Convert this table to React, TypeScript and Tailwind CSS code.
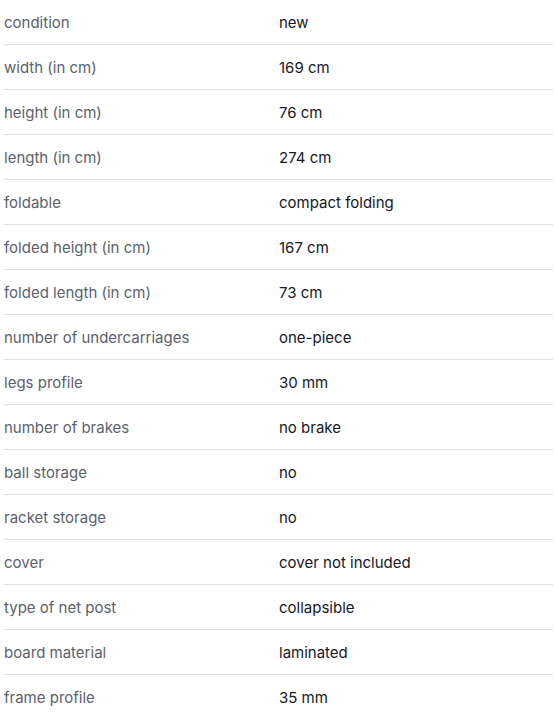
import React from 'react';

const specs: [string, string][] = [
  ['condition', 'new'],
  ['width (in cm)', '169 cm'],
  ['height (in cm)', '76 cm'],
  ['length (in cm)', '274 cm'],
  ['foldable', 'compact folding'],
  ['folded height (in cm)', '167 cm'],
  ['folded length (in cm)', '73 cm'],
  ['number of undercarriages', 'one-piece'],
  ['legs profile', '30 mm'],
  ['number of brakes', 'no brake'],
  ['ball storage', 'no'],
  ['racket storage', 'no'],
  ['cover', 'cover not included'],
  ['type of net post', 'collapsible'],
  ['board material', 'laminated'],
  ['frame profile', '35 mm'],
];

const App = () => {
  return (
    <div className="bg-white px-1 font-['Inter',sans-serif] text-[15px]">
      {specs.map(([label, value]) => (
        <div key={label} className="flex h-[45px] items-center border-b border-[#e0e0e0] pt-[2px]">
          <div className="w-[275px] text-[#5b626c]">{label}</div>
          <div className="text-[#16181f]">{value}</div>
        </div>
      ))}
    </div>
  );
};

export default App;
